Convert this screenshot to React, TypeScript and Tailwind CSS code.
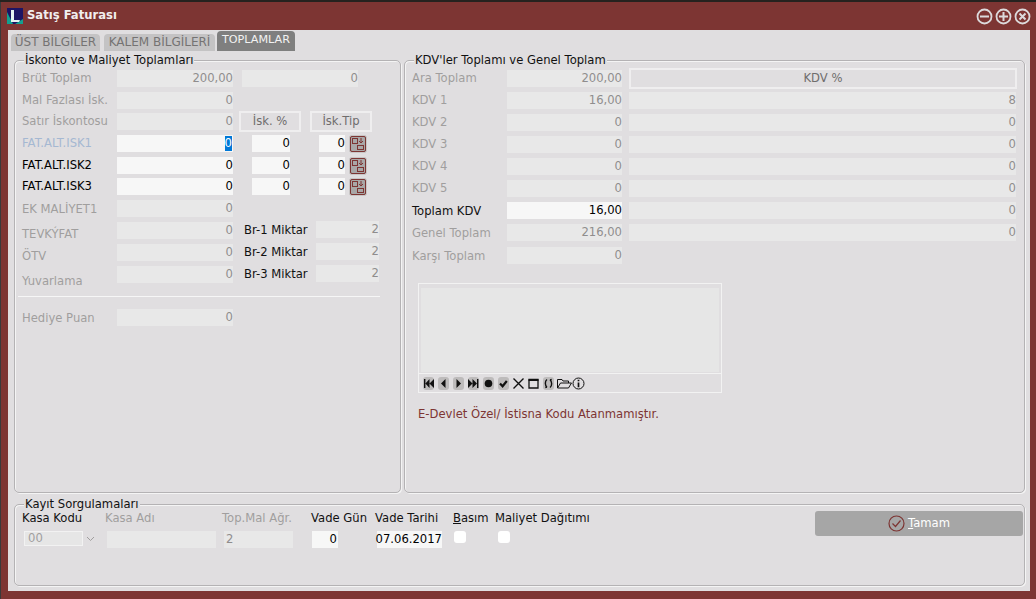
import type { ReactNode } from "react";

const FONT = "font-['DejaVu_Sans','Noto_Sans',sans-serif]";

function Field({ value, className = "", input = false, align = "right" }: { value: string; className?: string; input?: boolean; align?: "right" | "left" }) {
  return (
    <div
      className={`h-[17px] flex items-center text-[11.6px] ${align === "right" ? "justify-end" : "justify-start"} ${
        input ? "bg-[#f7f7f7] text-black" : "bg-[#e8e8e8] text-[#8f8d8d]"
      } ${className}`}
    >
      {value}
    </div>
  );
}

function Label({ children, className = "" }: { children: ReactNode; className?: string }) {
  return <div className={`text-[11.6px] leading-[17px] whitespace-nowrap ${className}`}>{children}</div>;
}

function FlatButton({ children, className = "" }: { children: ReactNode; className?: string }) {
  return (
    <div className={`h-[21px] flex items-center justify-center border-2 border-[#efeeef] text-[11.6px] text-[#6f6d6d] ${className}`}>
      {children}
    </div>
  );
}

function LookupIcon({ className = "" }: { className?: string }) {
  return (
    <svg width="18" height="18" viewBox="0 0 18 18" className={className}>
      <rect x="0.5" y="0.5" width="17" height="17" rx="2" fill="#a9a7a7" stroke="#c8c6c6" />
      <rect x="1.5" y="1.5" width="15" height="15" rx="1.5" fill="none" stroke="#7d3533" />
      <rect x="3.5" y="3.5" width="5" height="5" fill="none" stroke="#7d3533" />
      <rect x="8.5" y="10.5" width="6" height="4" fill="none" stroke="#7d3533" />
      <path d="M12 3v5M10 6l2 2 2-2" fill="none" stroke="#7d3533" />
    </svg>
  );
}

function Panel({ title, className = "", children }: { title: string; className?: string; children: ReactNode }) {
  return (
    <section
      className={`relative rounded-[5px] border border-[#b4b2b4] shadow-[inset_1px_1px_0_#f4f4f4,1px_1px_0_#f4f4f4] ${className}`}
    >
      <h2 className="absolute -top-[8px] left-[9px] bg-[#e0dee0] px-[1px] text-[11.6px] leading-[14px] font-normal text-[#111]">{title}</h2>
      {children}
    </section>
  );
}

function WindowButton({ kind }: { kind: "min" | "max" | "close" }) {
  return (
    <svg width="17" height="17" viewBox="0 0 17 17">
      <circle cx="8.5" cy="8.5" r="7" fill="none" stroke="#dcdadc" strokeWidth="1.8" />
      {kind !== "close" && <path d="M4 8.5h9" stroke="#dcdadc" strokeWidth="2" />}
      {kind === "max" && <path d="M8.5 4v9" stroke="#dcdadc" strokeWidth="2" />}
      {kind === "close" && <path d="M5.5 5.5l6 6M11.5 5.5l-6 6" stroke="#dcdadc" strokeWidth="2" />}
    </svg>
  );
}

function ToolIcon({ children, pill = false }: { children: ReactNode; pill?: boolean }) {
  return (
    <svg width="15" height="13" viewBox="0 0 15 13">
      {pill && <rect x="1" y="0" width="11" height="13" rx="3" fill="#bdbbbb" />}
      {children}
    </svg>
  );
}

const leftRows = [
  { label: "EK MALİYET1", labelPad: "pt-[1px]" },
  { label: "TEVKÝFAT", labelPad: "pt-[4px]", br: "Br-1 Miktar" },
  { label: "ÖTV", labelPad: "pt-[4px]", br: "Br-2 Miktar" },
  { label: "Yuvarlama", labelPad: "pt-[7px]", br: "Br-3 Miktar" },
];

const kdvRows = [
  { label: "KDV 1", value: "16,00", right: "8" },
  { label: "KDV 2", value: "0", right: "0" },
  { label: "KDV 3", value: "0", right: "0" },
  { label: "KDV 4", value: "0", right: "0" },
  { label: "KDV 5", value: "0", right: "0" },
];

function IskRow({ label, labelClass, selected = false, top }: { label: string; labelClass: string; selected?: boolean; top: string }) {
  return (
    <div className={`flex items-center h-[17px] ${top}`}>
      <Label className={`w-[95px] ${labelClass}`}>{label}</Label>
      <div className="h-[17px] w-[116px] bg-[#f7f7f7] flex items-center justify-end text-[11.6px] text-black">
        {selected ? <span className="bg-[#0078d7] text-white leading-[15px] mr-[1px]">0</span> : "0"}
      </div>
      <Field input value="0" className="w-[38px] ml-[19px]" />
      <Field input value="0" className="w-[26px] ml-[29px]" />
      <LookupIcon className="ml-[4px] shrink-0" />
    </div>
  );
}

export default function App() {
  return (
    <div className={`${FONT} w-[1036px] h-[599px] overflow-hidden bg-[#7d3533] shadow-[inset_1px_0_0_#3a3a3a] flex flex-col`}>
      <div className="h-[2px] bg-[#26221f] shrink-0" />
      {/* title bar */}
      <header className="h-[28px] shrink-0 flex items-center pl-[7px] pr-[5px]">
        <svg width="16" height="16" viewBox="0 0 16 16">
          <rect width="16" height="16" fill="#1c1464" />
          <path d="M0 4l6 12H0z" fill="#12a08f" />
          <path d="M16 16H8l8-5z" fill="#12a08f" />
          <path d="M4 2h3v10h6l-1 2H4z" fill="#e6f2f2" />
        </svg>
        <h1 className="ml-[4px] text-[11.6px] font-bold text-[#f1eeee]">Satış Faturası</h1>
        <div className="ml-auto flex gap-[2px]">
          <WindowButton kind="min" />
          <WindowButton kind="max" />
          <WindowButton kind="close" />
        </div>
      </header>

      <main className="w-[1022px] ml-[8px] h-[561px] bg-[#e0dee0] shrink-0 flex flex-col">
        {/* tabs */}
        <div className="h-[21px] pl-[3px] flex items-end gap-[4px] shrink-0">
          <div className="h-[17px] w-[89px] pb-[2px] bg-[#c4c3c4] rounded-t-[4px] flex items-center justify-center text-[12px] text-[#757373]">ÜST BİLGİLER</div>
          <div className="h-[17px] w-[111px] pb-[2px] bg-[#c4c3c4] rounded-t-[4px] flex items-center justify-center text-[12px] text-[#757373]">KALEM BİLGİLERİ</div>
          <div className="h-[20px] w-[78px] -ml-[2px] pb-[1px] bg-[#7f7f7f] rounded-t-[4px] flex items-center justify-center text-[11.2px] text-[#f2f2f2]">TOPLAMLAR</div>
        </div>

        <div className="flex gap-[3px] pl-[6px] mt-[9px] h-[433px] shrink-0">
          {/* left panel */}
          <Panel title="İskonto ve Maliyet Toplamları" className="w-[387px] h-[433px] pl-[7px] pt-[9px]">
            <div className="flex items-center h-[17px]">
              <Label className="w-[95px] text-[#a09e9e]">Brüt Toplam</Label>
              <Field value="200,00" className="w-[116px]" />
              <Field value="0" className="w-[116px] ml-[9px]" />
            </div>
            <div className="flex items-center h-[17px] mt-[5px]">
              <Label className="w-[95px] text-[#a09e9e]">Mal Fazlası İsk.</Label>
              <Field value="0" className="w-[116px]" />
            </div>
            <div className="flex items-center h-[17px] mt-[4px]">
              <Label className="w-[95px] text-[#a09e9e]">Satır İskontosu</Label>
              <Field value="0" className="w-[116px]" />
              <FlatButton className="w-[62px] ml-[6px] shrink-0">İsk. %</FlatButton>
              <FlatButton className="w-[62px] ml-[9px] shrink-0">İsk.Tip</FlatButton>
            </div>
            <IskRow label="FAT.ALT.ISK1" labelClass="text-[#a5b8d2]" selected top="mt-[5px]" />
            <IskRow label="FAT.ALT.ISK2" labelClass="text-black" top="mt-[5px]" />
            <IskRow label="FAT.ALT.ISK3" labelClass="text-black" top="mt-[4px]" />
            {leftRows.map((r) => (
              <div key={r.label} className="flex items-center h-[17px] mt-[5px]">
                <Label className={`w-[95px] h-[17px] text-[#a09e9e] ${r.labelPad}`}>{r.label}</Label>
                <Field value="0" className="w-[116px]" />
                {r.br && (
                  <>
                    <Label className="w-[72px] pl-[11px] text-[#111]">{r.br}</Label>
                    <Field value="2" className="w-[63px] ml-[11px] -mt-[2px]" />
                  </>
                )}
              </div>
            ))}
            <div className="h-[1px] w-[362px] -ml-[4px] mt-[13px] bg-[#f6f6f6]" />
            <div className="flex items-center h-[17px] mt-[12px]">
              <Label className="w-[95px] h-[17px] pt-[1px] text-[#a09e9e]">Hediye Puan</Label>
              <Field value="0" className="w-[116px]" />
            </div>
          </Panel>

          {/* right panel */}
          <Panel title="KDV'ler Toplamı ve Genel Toplam" className="w-[621px] h-[433px] pl-[7px] pt-[9px]">
            <div className="flex items-center h-[17px]">
              <Label className="w-[95px] text-[#a09e9e]">Ara Toplam</Label>
              <Field value="200,00" className="w-[115px]" />
              <FlatButton className="w-[388px] ml-[7px] shrink-0">KDV %</FlatButton>
            </div>
            {kdvRows.map((r) => (
              <div key={r.label} className="flex items-center h-[17px] mt-[5px]">
                <Label className="w-[95px] text-[#a09e9e]">{r.label}</Label>
                <Field value={r.value} className="w-[115px]" />
                <Field value={r.right} className="w-[387px] ml-[7px]" />
              </div>
            ))}
            <div className="flex items-center h-[17px] mt-[5px]">
              <Label className="w-[95px] h-[17px] pt-[1px] text-[#111]">Toplam KDV</Label>
              <Field input value="16,00" className="w-[115px]" />
              <Field value="0" className="w-[387px] ml-[7px]" />
            </div>
            <div className="flex items-center h-[17px] mt-[5px]">
              <Label className="w-[95px] h-[17px] pt-[1px] text-[#a09e9e]">Genel Toplam</Label>
              <Field value="216,00" className="w-[115px]" />
              <Field value="0" className="w-[387px] ml-[7px]" />
            </div>
            <div className="flex items-center h-[17px] mt-[6px]">
              <Label className="w-[95px] h-[17px] pt-[1px] text-[#a09e9e]">Karşı Toplam</Label>
              <Field value="0" className="w-[115px]" />
            </div>

            {/* memo with navigator */}
            <div className="w-[304px] h-[110px] ml-[6px] mt-[19px] border border-[#f2f2f2] flex flex-col">
              <div className="h-[89px] pt-[4px] px-[2px] shrink-0">
                <div className="h-[84px] bg-[#e6e6e6]" />
              </div>
              <div className="border-t border-[#f2f2f2] h-[19px] flex items-center pl-[3px]">
                <ToolIcon pill><path d="M2 2v9h1.4V2zM7.5 2v9L3.4 6.5zM12 2v9L7.5 6.5z" fill="#111" /></ToolIcon>
                <ToolIcon pill><path d="M8.5 2v9L4 6.5z" fill="#111" /></ToolIcon>
                <ToolIcon pill><path d="M4.5 2v9L9 6.5z" fill="#111" /></ToolIcon>
                <ToolIcon pill><path d="M1 2v9l4.5-4.5zM5.5 2v9L10 6.5zM10 2v9h1.4V2z" fill="#111" /></ToolIcon>
                <ToolIcon pill><circle cx="6.5" cy="6.5" r="3.8" fill="#111" /></ToolIcon>
                <ToolIcon pill><path d="M3 6.5l2.6 2.8 4.2-5.3" fill="none" stroke="#111" strokeWidth="2.2" /></ToolIcon>
                <ToolIcon><path d="M1.5 1.5l10 10M11.5 1.5l-10 10" stroke="#111" strokeWidth="1.4" /></ToolIcon>
                <ToolIcon><path d="M2 2.5h9v8.5H2z" fill="none" stroke="#111" strokeWidth="1.3" /><path d="M1.5 3.2h10" stroke="#111" strokeWidth="1.6" /></ToolIcon>
                <ToolIcon pill><path d="M5 2.5C2.8 4 2.8 8.5 5 10M8 3C10.2 4.5 10.2 9 8 10.5M5 10l-1.7.5M8 3l1.7-.5" fill="none" stroke="#111" strokeWidth="1.4" /></ToolIcon>
                <ToolIcon><path d="M0.5 11V2.5h4.5l1 1.5h5.5v2M0.5 11l3-5h11l-3 5z" fill="none" stroke="#111" /></ToolIcon>
                <ToolIcon><circle cx="6.5" cy="6.5" r="5.5" fill="none" stroke="#111" /><path d="M6.5 2.8v1.5M6.5 5.5V10.3" stroke="#111" strokeWidth="1.7" /></ToolIcon>
              </div>
            </div>
            <div className="ml-[6px] mt-[13px] text-[11.6px] leading-[16px] text-[#7d3533]">E-Devlet Özel/ İstisna Kodu Atanmamıştır.</div>
          </Panel>
        </div>

        {/* bottom panel */}
        <Panel title="Kayıt Sorgulamaları" className="w-[1011px] h-[82px] ml-[6px] mt-[11px] shrink-0">
          <div className="flex items-start pt-[5px]">
            <div className="w-[84px] ml-[8px]">
              <Label className="-ml-[1px] text-[#111]">Kasa Kodu</Label>
              <div className="mt-[4px] flex items-center">
                <div className="w-[59px] h-[15px] ml-[1px] border border-[#f2f2f2] bg-[#e6e6e6] flex items-center px-[3px] text-[11.6px] text-[#a09e9e]">00</div>
                <svg width="9" height="6" viewBox="0 0 9 6" className="ml-[3px]">
                  <path d="M1 1l3.5 3.5L8 1" fill="none" stroke="#a09e9e" />
                </svg>
              </div>
            </div>
            <div className="w-[117px]">
              <Label className="-ml-[2px] text-[#a09e9e]">Kasa Adı</Label>
              <Field value="" className="w-[109px] mt-[4px]" />
            </div>
            <div className="w-[87px]">
              <Label className="-ml-[2px] text-[#a09e9e]">Top.Mal Ağr.</Label>
              <Field value="2" align="left" className="w-[69px] mt-[4px] pl-[2px] text-[#7a7878]" />
            </div>
            <div className="w-[64px]">
              <Label className="text-[#111]">Vade Gün</Label>
              <Field input value="0" className="w-[26px] mt-[4px] ml-[1px] pr-[1px]" />
            </div>
            <div className="w-[78px]">
              <Label className="text-[#111]">Vade Tarihi</Label>
              <Field input value="07.06.2017" className="w-[65px] mt-[4px] ml-[2px]" />
            </div>
            <div className="w-[42px]">
              <Label className="text-[#111]"><span className="underline">B</span>asım</Label>
              <div className="w-[12px] h-[12px] rounded-[3px] bg-white mt-[4px] ml-[1px]" />
            </div>
            <div>
              <Label className="text-[#111] text-[11.2px]">Maliyet Dağıtımı</Label>
              <div className="w-[12px] h-[12px] rounded-[3px] bg-white mt-[4px] ml-[3px]" />
            </div>
            <div className="ml-auto mr-[1px] w-[208px] h-[25px] mt-[1px] bg-[#a6a6a6] rounded-[3px] flex items-center justify-center gap-[3px] text-[11.6px] text-white">
              <svg width="17" height="17" viewBox="0 0 17 17">
                <circle cx="8.5" cy="8.5" r="7.5" fill="none" stroke="#7d3533" strokeWidth="1.2" />
                <path d="M4.5 8.5l3 3 5-6" fill="none" stroke="#7d3533" strokeWidth="1.2" />
              </svg>
              <span><span className="underline">T</span>amam</span>
            </div>
          </div>
        </Panel>
      </main>
    </div>
  );
}
